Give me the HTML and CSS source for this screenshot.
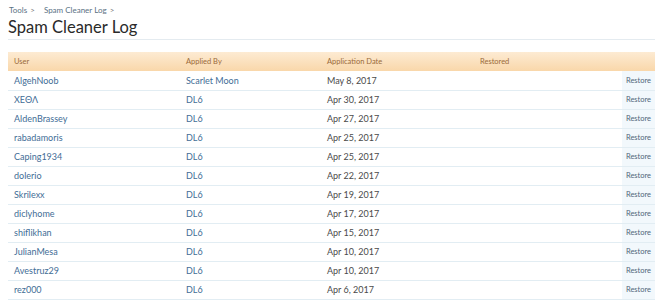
FILE: index.html
```html
<!DOCTYPE html>
<html lang="en">
<head>
  <meta charset="UTF-8" />
  <title>Spam Cleaner Log</title>
  <link rel="stylesheet" href="styles.css">
</head>
<body>

<!-- Breadcrumb + title -->
<div class="crumbs">
  <a href="#">Tools</a><span class="sep">&gt;</span>
  <a href="#">Spam Cleaner Log</a><span class="sep">&gt;</span>
</div>
<h1 class="title">Spam Cleaner Log</h1>

<!-- Log table -->
<table class="log">
  <thead>
    <tr>
      <th class="c-user">User</th>
      <th class="c-by">Applied By</th>
      <th class="c-date">Application Date</th>
      <th class="c-rest">Restored</th>
      <th class="c-act"></th>
    </tr>
  </thead>
  <tbody>
    <tr><td><a href="#">AlgehNoob</a></td><td><a href="#">Scarlet Moon</a></td><td>May 8, 2017</td><td></td><td class="act"><a href="#">Restore</a></td></tr>
    <tr><td><a href="#">XEΘΛ</a></td><td><a href="#">DL6</a></td><td>Apr 30, 2017</td><td></td><td class="act"><a href="#">Restore</a></td></tr>
    <tr><td><a href="#">AldenBrassey</a></td><td><a href="#">DL6</a></td><td>Apr 27, 2017</td><td></td><td class="act"><a href="#">Restore</a></td></tr>
    <tr><td><a href="#">rabadamoris</a></td><td><a href="#">DL6</a></td><td>Apr 25, 2017</td><td></td><td class="act"><a href="#">Restore</a></td></tr>
    <tr><td><a href="#">Caping1934</a></td><td><a href="#">DL6</a></td><td>Apr 25, 2017</td><td></td><td class="act"><a href="#">Restore</a></td></tr>
    <tr><td><a href="#">dolerio</a></td><td><a href="#">DL6</a></td><td>Apr 22, 2017</td><td></td><td class="act"><a href="#">Restore</a></td></tr>
    <tr><td><a href="#">Skrilexx</a></td><td><a href="#">DL6</a></td><td>Apr 19, 2017</td><td></td><td class="act"><a href="#">Restore</a></td></tr>
    <tr><td><a href="#">diclyhome</a></td><td><a href="#">DL6</a></td><td>Apr 17, 2017</td><td></td><td class="act"><a href="#">Restore</a></td></tr>
    <tr><td><a href="#">shiflikhan</a></td><td><a href="#">DL6</a></td><td>Apr 15, 2017</td><td></td><td class="act"><a href="#">Restore</a></td></tr>
    <tr><td><a href="#">JulianMesa</a></td><td><a href="#">DL6</a></td><td>Apr 10, 2017</td><td></td><td class="act"><a href="#">Restore</a></td></tr>
    <tr><td><a href="#">Avestruz29</a></td><td><a href="#">DL6</a></td><td>Apr 10, 2017</td><td></td><td class="act"><a href="#">Restore</a></td></tr>
    <tr><td><a href="#">rez000</a></td><td><a href="#">DL6</a></td><td>Apr 6, 2017</td><td></td><td class="act"><a href="#">Restore</a></td></tr>
  </tbody>
</table>

</body>
</html>
```

FILE: styles.css
```css
* { margin: 0; padding: 0; box-sizing: border-box; }
html, body {
  background: #fff;
  font-family: Lato, "Open Sans", sans-serif;
  color: #333;
}
body {
  padding: 5px 12px 0 8px;
  overflow: hidden;
}

a {
  color: #3f6d96;
  text-decoration: none;
}

.crumbs {
  font-size: 8px;
  line-height: 10px;
  padding-left: 1px;
}
.crumbs a { color: #5a7184; }
.crumbs .sep {
  color: #777;
  margin: 0 7px 0 3px;
}

.title {
  font-weight: normal;
  font-size: 16.5px;
  line-height: 20px;
  color: #2a2a2a;
  padding: 2px 0 2px 0;
  border-bottom: 1px solid #e4ebf0;
  margin-bottom: 12px;
}

.log {
  width: 647px;
  border-collapse: collapse;
  font-size: 9px;
}

.log th {
  height: 19px;
  text-align: left;
  font-weight: normal;
  font-size: 7.5px;
  color: #9a6a3a;
  background: linear-gradient(#fdebd3, #f9d7aa);
  padding: 0 6px;
}

.log td {
  height: 19px;
  padding: 0 6px;
  border-bottom: 1px solid #e2edf3;
  color: #4a4a4a;
  white-space: nowrap;
}

.c-user { width: 172px; }
.c-by { width: 141px; }
.c-date { width: 153px; }
.c-rest { width: 148px; }

.log td.act {
  background: #f2f8fc;
  text-align: center;
  font-size: 7.5px;
  padding: 0;
  width: 33px;
}
.log td.act a { color: #50677a; }
```
